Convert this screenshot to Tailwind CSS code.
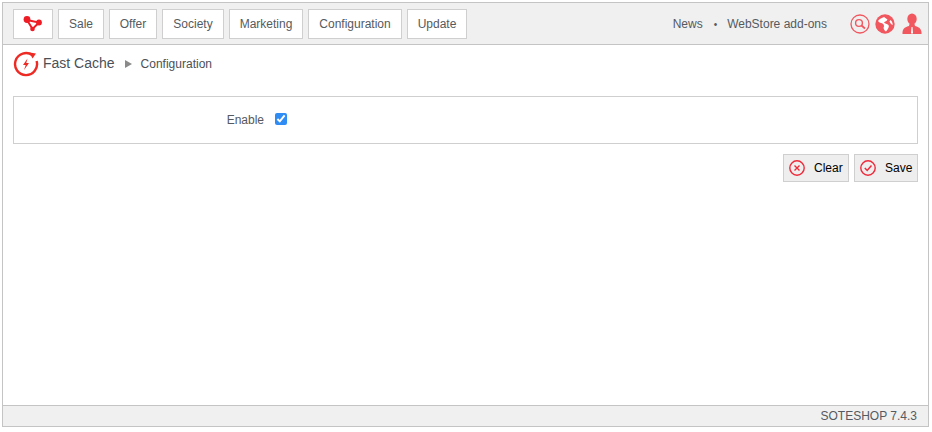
<!DOCTYPE html>
<html>
<head>
<meta charset="utf-8">
<title>Fast Cache</title>
<script src="https://cdn.jsdelivr.net/npm/@tailwindcss/browser@4"></script>
</head>
<body class="bg-white font-['Liberation_Sans',sans-serif] text-[#555a60] overflow-hidden">
<div class="ml-[2px] mt-[2px] w-[927px] h-[425px] border border-[#c4c4c4] flex flex-col">

    <!-- top menu -->
    <nav class="h-[42px] shrink-0 bg-[#f0f0f0] border-b border-[#c4c4c4] flex items-center pl-[10px] pr-[6px] pt-[1px]">
        <a class="w-[40px] h-[30px] bg-white border border-[#cfcfcf] flex items-center justify-center">
            <svg width="20" height="16" viewBox="0 0 20 16">
                <path d="M4 4 L16 6.5 L9.5 13 Z" fill="none" stroke="#ee1c25" stroke-width="2"/>
                <circle cx="4" cy="3.5" r="3.4" fill="#ee1c25"/>
                <circle cx="16" cy="6.5" r="2.9" fill="#ee1c25"/>
                <circle cx="9.5" cy="13" r="2.3" fill="#ee1c25"/>
            </svg>
        </a>
        <div class="flex gap-[5px] ml-[5px] text-[12px]">
            <a class="w-[46px] h-[30px] bg-white border border-[#cfcfcf] flex items-center justify-center">Sale</a>
            <a class="w-[48px] h-[30px] bg-white border border-[#cfcfcf] flex items-center justify-center">Offer</a>
            <a class="w-[62px] h-[30px] bg-white border border-[#cfcfcf] flex items-center justify-center">Society</a>
            <a class="w-[74px] h-[30px] bg-white border border-[#cfcfcf] flex items-center justify-center">Marketing</a>
            <a class="w-[94px] h-[30px] bg-white border border-[#cfcfcf] flex items-center justify-center">Configuration</a>
            <a class="w-[60px] h-[30px] bg-white border border-[#cfcfcf] flex items-center justify-center">Update</a>
        </div>
        <div class="ml-auto flex items-center text-[12px]">
            <a>News</a>
            <span class="ml-[11px] mr-[10px] text-[10px]">•</span>
            <a>WebStore add-ons</a>
        </div>
        <div class="flex items-center ml-[23px] gap-[5px]">
            <svg width="20" height="20" viewBox="0 0 20 20">
                <circle cx="10" cy="10" r="9" fill="none" stroke="#f0575f" stroke-width="1.3"/>
                <circle cx="9" cy="9" r="3.4" fill="none" stroke="#f0575f" stroke-width="1.4"/>
                <path d="M11.5 11.5 L15 14.5" stroke="#f0575f" stroke-width="1.8"/>
            </svg>
            <svg width="20" height="20" viewBox="0 0 20 20">
                <circle cx="10" cy="10" r="9.7" fill="#f0575f"/>
                <path d="M9 3 C7 4 4.5 4.5 3 7 C4 9 6 8.5 7.5 9.5 C9 10.5 9.5 12 8.5 14 C9 16 10 17 11 17.5 C13 15 14.5 13 13.5 11 C12 9.5 10 10 9 8.5 C10 7 12 7.5 12.5 5.5 Z" fill="#fff"/>
                <path d="M15.5 6 C17 7 17.7 9 17.7 11 C16.5 10.5 15 9 14.5 7.5 Z" fill="#fff"/>
            </svg>
            <svg width="20" height="22" viewBox="0 0 20 22" class="ml-[2px] -mt-[1px]">
                <ellipse cx="10" cy="6" rx="4.7" ry="5.6" fill="#f0575f"/>
                <path d="M7.5 11 L12.5 11 L13 13 C16 13.8 19 15 19.5 19 L19.5 21 L0.5 21 L0.5 19 C1 15 4 13.8 7 13 Z" fill="#f0575f"/>
                <path d="M9.5 14 L10.5 14 L11 20 L10 21 L9 20 Z" fill="#fff"/>
            </svg>
        </div>
    </nav>

    <!-- breadcrumb -->
    <div class="flex items-center h-[38px] pl-[10px]">
        <svg width="26" height="26" viewBox="0 0 26 26">
            <path d="M19.5 4.2 A11 11 0 1 0 23.6 10" fill="none" stroke="#ee2a24" stroke-width="2.4"/>
            <path d="M16.5 1.5 L23 2.5 L19.5 7.5 Z" fill="#ee2a24"/>
            <path d="M14.5 7.5 L10 14 L12.7 14 L11 19 L16 12 L13.3 12 Z" fill="#ee2a24"/>
        </svg>
        <span class="ml-[4px] text-[14px] text-[#4b5057] -mt-[1px]">Fast Cache</span>
        <span class="ml-[10px] w-0 h-0 border-y-[4px] border-y-transparent border-l-[7px] border-l-[#8a8a8a]"></span>
        <span class="ml-[9px] text-[12px] text-[#4b5057]">Configuration</span>
    </div>

    <!-- form -->
    <main class="flex-1 px-[10px] pt-[13px]">
        <div class="h-[48px] border border-[#cfcfcf] flex items-center">
            <label class="w-[250px] text-right text-[12px]">Enable</label>
            <input type="checkbox" checked class="ml-[11px] -mt-[3px] w-[12px] h-[12px] accent-[#2f8cf5]">
        </div>
        <div class="flex justify-end gap-[5px] mt-[10px] text-[12px] text-black">
            <button class="w-[66px] h-[28px] bg-[#eeeeee] border border-[#cfcfcf] flex items-center pl-[5px]">
                <svg width="16" height="16" viewBox="0 0 16 16">
                    <circle cx="8" cy="8" r="7.2" fill="none" stroke="#ee2a3a" stroke-width="1.4"/>
                    <path d="M5.5 5.5 L10.5 10.5 M10.5 5.5 L5.5 10.5" stroke="#ee2a3a" stroke-width="1.4"/>
                </svg>
                <span class="ml-[9px]">Clear</span>
            </button>
            <button class="w-[64px] h-[28px] bg-[#eeeeee] border border-[#cfcfcf] flex items-center pl-[5px]">
                <svg width="16" height="16" viewBox="0 0 16 16">
                    <circle cx="8" cy="8" r="7.2" fill="none" stroke="#ee2a3a" stroke-width="1.4"/>
                    <path d="M4.8 8 L7.2 10.5 L11.5 5.5" fill="none" stroke="#ee2a3a" stroke-width="1.5"/>
                </svg>
                <span class="ml-[9px]">Save</span>
            </button>
        </div>
    </main>

    <footer class="h-[21px] shrink-0 bg-[#f0f0f0] border-t border-[#c4c4c4] flex items-center justify-end pr-[11px] text-[12px]">SOTESHOP 7.4.3</footer>
</div>
</body>
</html>
